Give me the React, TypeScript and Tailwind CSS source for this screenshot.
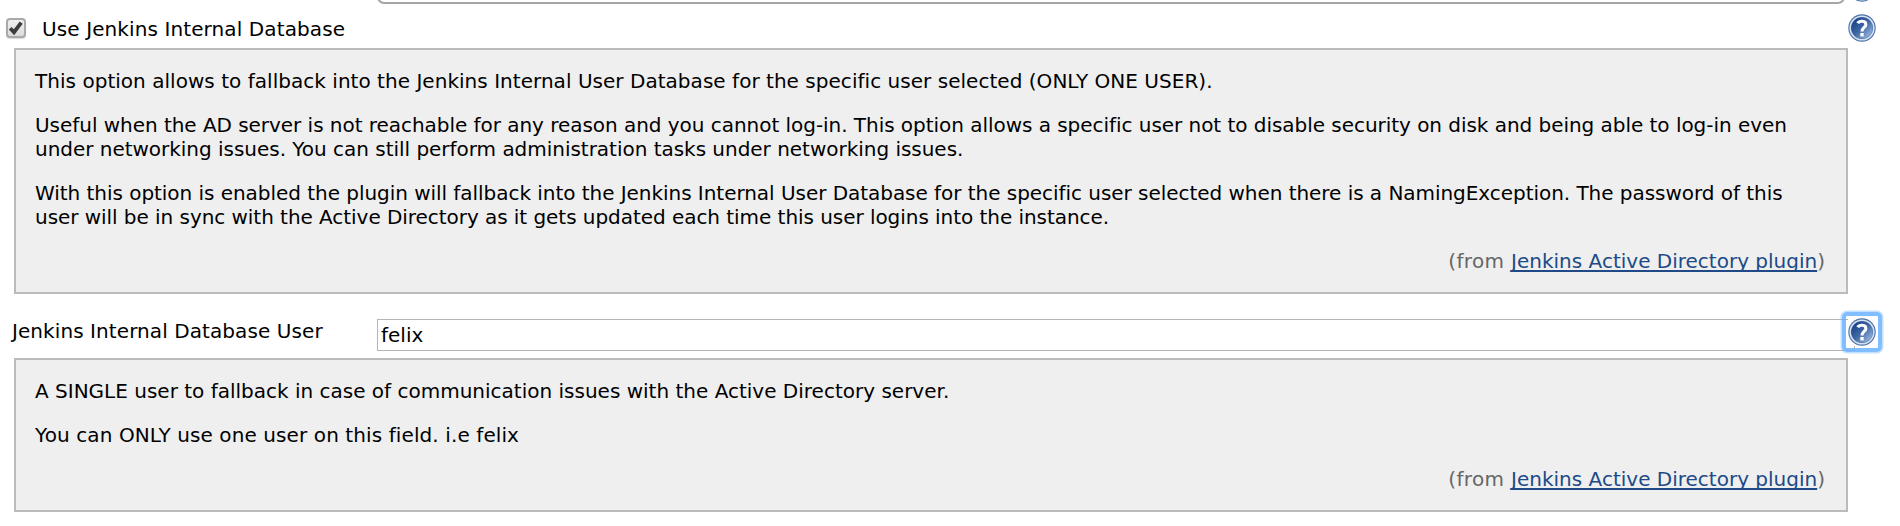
import type { ReactNode } from "react";

function HelpIcon({ id }: { id: string }) {
  return (
    <svg viewBox="0 0 28 28" className="block h-7 w-7 shrink-0">
      <defs>
        <linearGradient id={id} x1="0" y1="0" x2="1" y2="1">
          <stop offset="0.15" stopColor="#1c4587" />
          <stop offset="0.5" stopColor="#3f68a5" />
          <stop offset="0.9" stopColor="#9ab8de" />
        </linearGradient>
      </defs>
      <rect width="28" height="28" fill="#fff" />
      <circle cx="14" cy="14" r="13.7" fill="#4a70aa" />
      <circle cx="14" cy="14" r="11.8" fill="none" stroke="#d5e0f0" strokeWidth="1.6" />
      <circle cx="14" cy="14" r="10.6" fill={`url(#${id})`} />
      <path
        d="M9.8 9.2 C11.2 6.6 17.9 6.2 17.9 10.4 C17.9 13.4 14 13.4 14 17.4"
        fill="none"
        stroke="#fff"
        strokeWidth="3.1"
      />
      <rect x="12.3" y="19" width="3.4" height="3.4" fill="#fff" />
    </svg>
  );
}

function Line({ className = "", children }: { className?: string; children: ReactNode }) {
  return <span className={`block whitespace-nowrap ${className}`}>{children}</span>;
}

function HelpBox({ children }: { children: ReactNode }) {
  return (
    <div className="ml-3.5 flex w-[1834px] flex-col gap-5 border-2 border-[#bbbbbb] bg-[#efefef] px-[19px] py-[19px]">
      {children}
      <p className="mr-[2px] text-right text-[#666666]">
        <span className="tracking-[0.35px]">(from </span>
        <a href="#" className="text-[#204a87] underline decoration-2 underline-offset-2 [text-decoration-skip-ink:none]">
          Jenkins Active Directory plugin
        </a>
        )
      </p>
    </div>
  );
}

export default function App() {
  return (
    <div className="h-[526px] w-[1900px] overflow-hidden bg-white font-['DejaVu_Sans',sans-serif] text-[20px] leading-6 text-black">
      <div className="flex h-1 overflow-hidden">
        <div className="ml-[377px] mr-[3px] flex h-1 w-[1468px] items-end overflow-hidden">
          <div className="h-5 w-full shrink-0 rounded-[7px] border-2 border-[#a6a6a6]" />
        </div>
        <div className="flex h-0.5 items-end overflow-hidden">
          <HelpIcon id="help-a" />
        </div>
      </div>

      <div className="flex h-11 items-start">
        <div className="ml-1.5 mt-3.5 h-5 w-5 rounded-[4px] border-2 border-[#a9a9a9] bg-linear-to-b from-[#f0f0f0] to-[#dcdcdc] shadow-[0_1px_1px_#d8d8d8]">
          <svg viewBox="0 0 16 16" className="block h-full w-full">
            <path d="M2.2 8.2 L6 12.2 L13.2 2.6" fill="none" stroke="#3d3d3d" strokeWidth="3.8" />
          </svg>
        </div>
        <span className="ml-4 mt-[13px] w-[1806px] whitespace-nowrap tracking-[0.105px]">Use Jenkins Internal Database</span>
        <div className="pt-2.5">
          <HelpIcon id="help-b" />
        </div>
      </div>

      <HelpBox>
        <p>
          <Line className="tracking-[0.032px]">This option allows to fallback into the Jenkins Internal User Database for the specific user selected (ONLY ONE USER).</Line>
        </p>
        <p>
          <Line className="tracking-[-0.04px]">Useful when the AD server is not reachable for any reason and you cannot log-in. This option allows a specific user not to disable security on disk and being able to log-in even</Line>
          <Line className="tracking-[-0.025px]">under networking issues. You can still perform administration tasks under networking issues.</Line>
        </p>
        <p>
          <Line className="tracking-[-0.042px]">With this option is enabled the plugin will fallback into the Jenkins Internal User Database for the specific user selected when there is a NamingException. The password of this</Line>
          <Line className="tracking-[-0.05px]">user will be in sync with the Active Directory as it gets updated each time this user logins into the instance.</Line>
        </p>
      </HelpBox>

      <div className="flex h-16 items-start">
        <span className="ml-3 mt-[25px] w-[365px] whitespace-nowrap tracking-[0.08px]">Jenkins Internal Database User</span>
        <div className="mt-[25px] flex h-8 w-[1478px] items-center border border-[#b5b5b5] pl-[3px]">felix</div>
        <div className="relative -ml-[7px] mt-6 h-7 w-7">
          <HelpIcon id="help-c" />
          <div className="absolute -inset-1.5 rounded-[5px] border-4 border-[#6bb3ff]/85 shadow-[0_0_0_1.5px_rgba(107,179,255,0.4)]" />
        </div>
      </div>

      <HelpBox>
        <p>
          <Line>A SINGLE user to fallback in case of communication issues with the Active Directory server.</Line>
        </p>
        <p>
          <Line className="tracking-[0.1px]">You can ONLY use one user on this field. i.e felix</Line>
        </p>
      </HelpBox>
    </div>
  );
}
